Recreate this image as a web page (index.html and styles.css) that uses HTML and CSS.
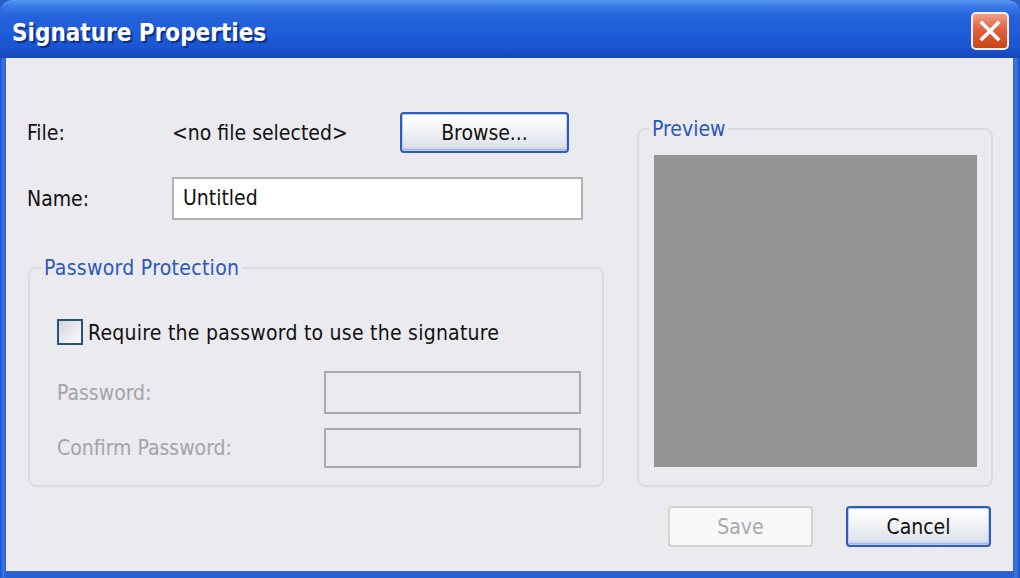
FILE: index.html
```html
<!DOCTYPE html>
<html>
<head>
<meta charset="utf-8">
<link rel="stylesheet" href="styles.css">
</head>
<body>
<div class="window">
  <div class="titlebar">
    <span class="title">Signature Properties</span>
    <button class="close" aria-label="Close">
      <svg width="24" height="24" viewBox="0 0 24 24"><path d="M4 4 L20 20 M20 4 L4 20" stroke="#fff" stroke-width="3.6" stroke-linecap="square"/></svg>
    </button>
  </div>
  <div class="client">
    <div class="left">
      <div class="row file-row">
        <span class="label">File:</span>
        <span class="file-name">&lt;no file selected&gt;</span>
        <button class="btn btn-default browse">Browse...</button>
      </div>
      <div class="row name-row">
        <span class="label">Name:</span>
        <div class="input name-input">Untitled</div>
      </div>
      <fieldset class="group pw-group">
        <legend>Password Protection</legend>
        <div class="check-row">
          <span class="checkbox"></span>
          <span class="check-text">Require the password to use the signature</span>
        </div>
        <div class="pw-row pw-first">
          <span class="label disabled">Password:</span>
          <div class="input input-disabled"></div>
        </div>
        <div class="pw-row pw-second">
          <span class="label disabled">Confirm Password:</span>
          <div class="input input-disabled short"></div>
        </div>
      </fieldset>
    </div>
    <div class="right">
      <fieldset class="group preview-group">
        <legend>Preview</legend>
        <div class="preview"></div>
      </fieldset>
      <div class="buttons">
        <button class="btn btn-disabled">Save</button>
        <button class="btn btn-default">Cancel</button>
      </div>
    </div>
  </div>
</div>
</body>
</html>
```

FILE: styles.css
```css
* { box-sizing: border-box; }
html, body { margin: 0; padding: 0; }
body {
  width: 1020px;
  height: 578px;
  overflow: hidden;
  font-family: "DejaVu Sans Condensed", "DejaVu Sans", sans-serif;
  font-size: 21px;
  line-height: 24px;
  color: #111;
  background: #2a5fc8;
}
.window {
  width: 1020px;
  height: 578px;
  display: flex;
  flex-direction: column;
  border-radius: 12px 12px 0 0;
  background: linear-gradient(to right, #1a4fc4 0, #3a78e0 3px, #2a62d4 6px, #2a62d4 1012px, #3a78e0 1016px, #1a4fc4 1020px);
  overflow: hidden;
}
.titlebar {
  height: 58px;
  flex: none;
  display: flex;
  align-items: center;
  justify-content: space-between;
  padding: 0 12px 0 12px;
  background: linear-gradient(to bottom, #5a9af2 0, #3a7ce8 6px, #2563dc 16px, #1d5ad8 38px, #1a52cc 50px, #1646b4 58px);
  border-radius: 12px 12px 0 0;
}
.title {
  font-family: "DejaVu Sans Condensed", "DejaVu Sans", sans-serif;
  font-weight: bold;
  font-size: 24px;
  color: #fff;
  text-shadow: 2px 2px 1px #0b2f8a;
  margin-top: 8px;
}
.close {
  width: 38px;
  height: 38px;
  margin-top: 4px;
  margin-right: -1px;
  padding: 0;
  border: 2px solid #f4f0f0;
  border-radius: 5px;
  background: linear-gradient(to bottom, #f0a088 0, #e0603c 45%, #cc4418 100%);
  display: flex;
  align-items: center;
  justify-content: center;
}
.client {
  flex: 1;
  margin: 0 7px 7px 6px;
  background: #ebeaef;
  display: flex;
  padding-left: 21px;
  border-bottom: 1px solid #f6f6f8;
}
.left {
  width: 576px;
  padding-top: 54px;
}
.row { display: flex; align-items: center; }
.label { width: 145px; flex: none; }
.file-row { height: 41px; }
.file-name { width: 228px; flex: none; }
.btn {
  font-family: inherit;
  font-size: 21px;
  color: #111;
  height: 41px;
  border-radius: 4px;
  padding: 0;
}
.btn-default {
  border: 2px solid #2e5db8;
  background: linear-gradient(to bottom, #ffffff 0, #f4f4f6 40%, #dfe3ec 85%, #c9d2e6 100%);
  box-shadow: inset 0 0 0 1px #b8cdf2, inset 0 -2px 1px #9ab4e6;
}
.browse { width: 169px; }
.name-row { margin-top: 24px; }
.input {
  height: 43px;
  border: 2px solid #b2b2b6;
  background: #fff;
  padding: 7px 9px;
}
.name-input { width: 411px; }
.group {
  margin: 0;
  border: 2px solid #dcdbe0;
  border-radius: 8px;
  min-width: 0;
}
.group legend {
  color: #2b58bb;
  padding: 0 3px;
  line-height: 24px;
  font-size: 21px;
}
.pw-group {
  width: 576px;
  margin-top: 36px;
  margin-left: 1px;
  padding: 0 0 19px 27px;
  height: 231px;
}
.pw-group legend { margin-left: -16px; letter-spacing: 0.3px; }
.check-row {
  display: flex;
  align-items: center;
  margin-top: 39px;
  height: 26px;
}
.check-text { letter-spacing: 0.25px; margin-top: 2px; }
.checkbox {
  width: 26px;
  height: 26px;
  border: 2px solid #25557f;
  background: linear-gradient(135deg, #d6d5db 0, #ecebf0 60%, #fafafc 100%);
  margin-right: 5px;
  flex: none;
}
.pw-row { display: flex; align-items: center; }
.pw-row .label { width: 267px; }
.disabled { color: #a4a4a8; }
.input-disabled {
  width: 257px;
  height: 43px;
  background: #ebeaef;
  border-color: #a9a9ae;
}
.pw-first { margin-top: 26px; }
.pw-second { margin-top: 14px; }
.input-disabled.short { height: 40px; }
.right {
  width: 356px;
  margin-left: 34px;
  padding-top: 59px;
  display: flex;
  flex-direction: column;
}
.preview-group {
  padding: 0 0 17px 15px;
  height: 370px;
}
.preview-group legend { margin-left: -5px; }
.preview {
  width: 323px;
  height: 312px;
  margin-top: 14px;
  background: #949494;
}
.buttons {
  display: flex;
  justify-content: flex-end;
  gap: 33px;
  margin-top: 19px;
  padding-right: 2px;
}
.buttons .btn { width: 145px; }
.btn-disabled {
  border: 2px solid #d3d2cc;
  background: #f8f8f9;
  color: #a9a9ab;
}
```
